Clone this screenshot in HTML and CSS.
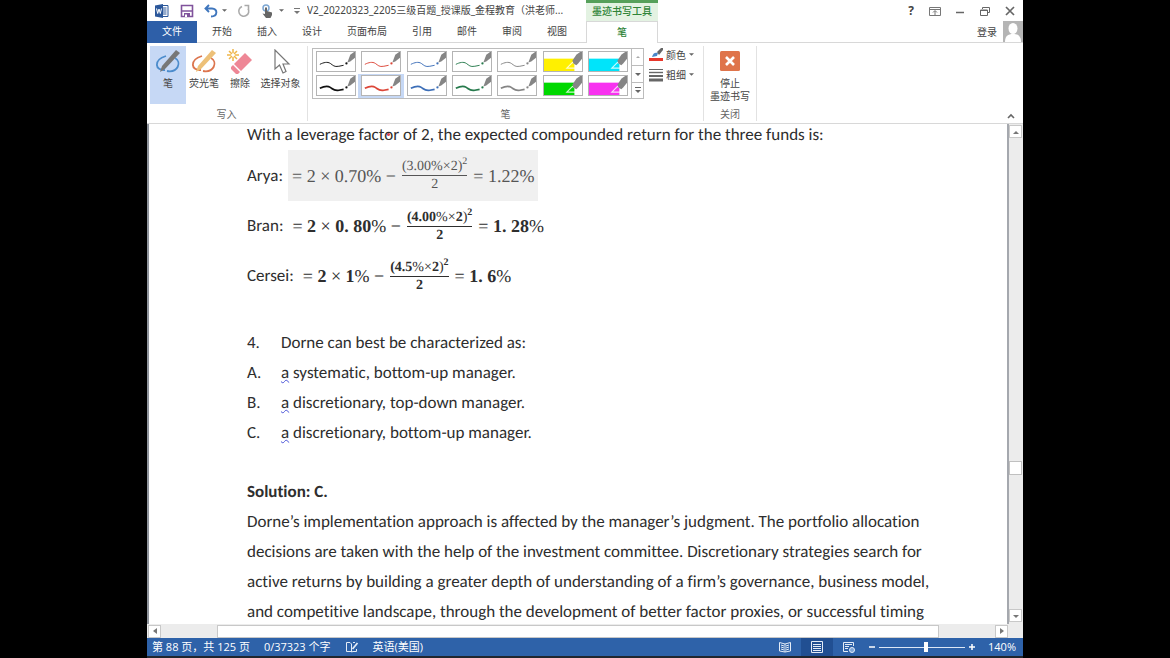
FILE: index.html
```html
<!DOCTYPE html>
<html lang="zh-CN">
<head>
<meta charset="utf-8">
<title>V2_20220323_2205三级百题_授课版</title>
<link rel="stylesheet" href="styles.css">
</head>
<body>
<svg class="defs" aria-hidden="true">
  <symbol id="nib" viewBox="0 0 40 20">
    <path d="M32 11L35 3L39 0H40V6L35 10Z" fill="#858585"/>
    <circle cx="31" cy="12" r="1.2" fill="currentColor"/>
  </symbol>
  <symbol id="fine" viewBox="0 0 40 20">
    <path d="M3 13C7 11 11 10 14 12S18 16 23 15L28 14" fill="none" stroke="currentColor"/>
    <use href="#nib"/>
  </symbol>
  <symbol id="bold" viewBox="0 0 40 20">
    <path d="M3 13C7 11 11 10 14 12S18 16 23 15L28 14" fill="none" stroke="currentColor" stroke-width="1.8"/>
    <use href="#nib"/>
  </symbol>
  <symbol id="marker" viewBox="0 0 40 20">
    <path d="M0 7H32V20H0Z" fill="currentColor"/>
    <path d="M30 11L24 17H33L34 13Z" fill="none" stroke="#fff" stroke-opacity=".8" stroke-width="1.2"/>
    <path d="M31 12L30 9L34 3L38 0H40V7L36 12L34 14Z" fill="#858585"/>
  </symbol>
  <symbol id="down" viewBox="0 0 6 4"><path d="M0 0H6L3 3Z" fill="#666"/></symbol>
</svg>

<div class="app">
  <header class="head">
    <div class="titlebar">
      <div class="quick">
        <svg class="i16" viewBox="0 0 16 16"><path d="M8 2.500H14V13.500H8" fill="#fff" stroke="#2b579a"/><path d="M9 5H12.500M9 7H12.500M9 9H12.500M9 11H12.500" stroke="#2b579a"/><path d="M1 2.500L9 1V15L1 13.500Z" fill="#2b579a"/><path d="M2.500 5.500L3.700 10.500L5 6L6.300 10.500L7.500 5.500" fill="none" stroke="#fff"/></svg>
        <button class="plain" aria-label="保存"><svg class="i14" viewBox="0 0 14 14"><path d="M1.500 1.500H12.500V12.500H1.500Z" fill="none" stroke="#80539c" stroke-width="1.600"/><path d="M2 7H12" stroke="#80539c" stroke-width="1.500"/><path d="M4 9H10V13H4Z" fill="#80539c"/><path d="M5 10.500H7V13H5Z" fill="#fff"/></svg></button>
        <button class="plain undo" aria-label="撤消"><svg class="i14" viewBox="0 0 14 14"><path d="M5 1L1.500 4.500L5 8M2 4.500H8C14 4.500 14 12.500 7 12.500" fill="none" stroke="#3f76bd" stroke-width="1.900"/></svg><svg class="caret"><use href="#down"/></svg></button>
        <button class="plain" aria-label="重复"><svg class="i14" viewBox="0 0 14 14"><path d="M5 2.500A5 5 0 1 0 11 4.500M7.500 1.500H11.500V5.500" fill="none" stroke="#aaa" stroke-width="1.600"/></svg></button>
        <button class="plain" aria-label="触摸模式"><svg class="i14" viewBox="0 0 14 14"><circle cx="5" cy="4" r="3" fill="none" stroke="#7da7d3" stroke-width="1.500"/><path d="M4 3.500H6V7L11 8.500V11L9.500 14H5L1.500 9.500L4 10Z" fill="#666"/></svg><svg class="caret"><use href="#down"/></svg></button>
        <button class="plain" aria-label="自定义"><svg class="i6" viewBox="0 0 6 8"><path d="M0 1.500H6" stroke="#777"/><path d="M0 4H6L3 7Z" fill="#777"/></svg></button>
      </div>
      <span class="doctitle">V2_20220323_2205三级百题_授课版_金程教育（洪老师...</span>
      <span class="context">墨迹书写工具</span>
      <div class="window">
        <button class="plain help" aria-label="帮助">?</button>
        <button class="plain" aria-label="功能区显示选项"><svg class="i12" viewBox="0 0 12 12"><path d="M.5 2.500H11.500V10.500H.5ZM.5 4.500H11.500M6 10V6M4 7.500L6 5.500L8 7.500" fill="none" stroke="#777"/></svg></button>
        <button class="plain" aria-label="最小化"><svg class="i12" viewBox="0 0 12 12"><path d="M2 7.500H10" stroke="#666" stroke-width="1.500"/></svg></button>
        <button class="plain" aria-label="还原"><svg class="i12" viewBox="0 0 12 12"><path d="M3.500 4V2.500H10.500V7.500H9M1.500 5H8.500V10.500H1.500ZM1.500 5.500H8.500" fill="none" stroke="#666"/></svg></button>
        <button class="plain" aria-label="关闭"><svg class="i12" viewBox="0 0 12 12"><path d="M2 2L10 10M10 2L2 10" stroke="#666" stroke-width="1.700"/></svg></button>
      </div>
    </div>
    <nav class="tabs">
      <button class="file">文件</button>
      <div class="tablist">
        <button class="tab">开始</button><button class="tab">插入</button><button class="tab">设计</button><button class="tab">页面布局</button><button class="tab">引用</button><button class="tab">邮件</button><button class="tab">审阅</button><button class="tab">视图</button>
      </div>
      <button class="tab active">笔</button>
      <button class="login">登录<svg class="avatar" viewBox="0 0 20 21"><path d="M0 0H20V21H0Z" fill="#b5b5b5"/><ellipse cx="10" cy="7.500" rx="4.500" ry="5.500" fill="#fff"/><path d="M2 21C2 15 5 13 10 13S18 15 18 21Z" fill="#fff"/></svg></button>
    </nav>
  </header>

  <section class="ribbon">
    <div class="group write">
      <div class="tools">
        <button class="tool on"><svg class="i26" viewBox="0 0 26 26"><path d="M11 7C-2 11 0 22 10 21M20 9C27 13 23 24 12 22" fill="none" stroke="#4c8ccc" stroke-width="1.800"/><path d="M21 1L25 4L10 20L5 23L7 17Z" fill="#777"/></svg>笔</button>
        <button class="tool"><svg class="i26" viewBox="0 0 26 26"><path d="M11 7C-2 11 0 22 10 21M20 9C27 13 23 24 12 22" fill="none" stroke="#dc754e" stroke-width="1.800"/><path d="M21 1L25 4L10 20L5 23L7 17Z" fill="#edc078"/></svg>荧光笔</button>
        <button class="tool"><svg class="i26" viewBox="0 0 26 26"><path d="M6 0V4M6 8V12M0 6H4M8 6H12M2 2L5 5M7 7L10 10M10 2L7 5M5 7L2 10" stroke="#efb64b" stroke-width="1.500"/><path d="M18 4L25 11L14 22L7 15Z" fill="#ee8796"/><path d="M6 16L13 23L11 25H9L4 20V18Z" fill="#ee8796"/></svg>擦除</button>
        <button class="tool wide"><svg class="i26" viewBox="0 0 26 26"><path d="M7 1V20L11.500 16L15 24L18 22.500L15 15H21Z" fill="#fff" stroke="#777" stroke-width="1.200"/></svg>选择对象</button>
      </div>
      <span class="caption">写入</span>
    </div>
    <div class="group pens">
      <div class="penrow">
        <div class="gallery">
          <div class="swatches">
            <button class="ink black"><svg><use href="#fine"/></svg></button>
            <button class="ink red"><svg><use href="#fine"/></svg></button>
            <button class="ink blue"><svg><use href="#fine"/></svg></button>
            <button class="ink green"><svg><use href="#fine"/></svg></button>
            <button class="ink gray"><svg><use href="#fine"/></svg></button>
            <button class="ink yellow"><svg><use href="#marker"/></svg></button>
            <button class="ink cyan"><svg><use href="#marker"/></svg></button>
            <button class="ink black"><svg><use href="#bold"/></svg></button>
            <button class="ink red chosen"><svg><use href="#bold"/></svg></button>
            <button class="ink blue"><svg><use href="#bold"/></svg></button>
            <button class="ink green"><svg><use href="#bold"/></svg></button>
            <button class="ink gray"><svg><use href="#bold"/></svg></button>
            <button class="ink lime"><svg><use href="#marker"/></svg></button>
            <button class="ink pink"><svg><use href="#marker"/></svg></button>
          </div>
          <div class="spinner">
            <button aria-label="上一行"><svg class="i6" viewBox="0 0 6 8"><path d="M1 5H5L3 3Z" fill="#aaa"/></svg></button>
            <button aria-label="下一行"><svg class="i6" viewBox="0 0 6 8"><path d="M0 3H6L3 6Z" fill="#666"/></svg></button>
            <button aria-label="其他"><svg class="i6" viewBox="0 0 6 8"><path d="M0 1.500H6" stroke="#666"/><path d="M0 4H6L3 7Z" fill="#666"/></svg></button>
          </div>
        </div>
        <div class="options">
          <button class="plain"><svg class="i14" viewBox="0 0 14 14"><path d="M0 10H14V13H0Z" fill="#e8382c"/><path d="M3 9C4 5 6 4 9 5L8 8Z" fill="#4a86c8"/><path d="M8 4L12 0H14V2L10 7Z" fill="#666"/></svg>颜色<svg class="caret"><use href="#down"/></svg></button>
          <button class="plain"><svg class="i14" viewBox="0 0 14 14"><path d="M0 1.500H14" stroke="#666"/><path d="M0 4.500H14" stroke="#666" stroke-width="1.400"/><path d="M0 8H14" stroke="#666" stroke-width="2"/><path d="M0 12H14" stroke="#666" stroke-width="3"/></svg>粗细<svg class="caret"><use href="#down"/></svg></button>
        </div>
      </div>
      <span class="caption">笔</span>
    </div>
    <div class="group stop">
      <button class="tool"><svg class="i26" viewBox="0 0 26 26"><rect x="3" y="2" width="20" height="20" rx="1.500" fill="#df744b"/><path d="M9 8L17 16M17 8L9 16" stroke="#fff" stroke-width="2.600"/></svg>停止<br>墨迹书写</button>
      <span class="caption">关闭</span>
    </div>
    <button class="plain collapse" aria-label="折叠功能区"><svg class="i10" viewBox="0 0 10 10"><path d="M2 7L5 4L8 7" fill="none" stroke="#666" stroke-width="1.600"/></svg></button>
  </section>

  <div class="work">
    <main class="page">
      <div class="content">
        <p class="line">With a leverage fact<span class="pointed">o</span>r of 2, the expected compounded return for the three funds is:</p>
        <div class="formula"><span>Arya:</span><span class="math shaded"><span>= 2 × 0.70% −</span><span class="frac"><span class="num">(3.00%×2)<sup>2</sup></span><span class="den">2</span></span><span>= 1.22%</span></span></div>
        <div class="formula"><span>Bran:</span><span class="math"><span>= <b>2</b> × <b>0. 80</b>% −</span><span class="frac"><span class="num"><b>(4.00</b>%×<b>2</b>)<sup><b>2</b></sup></span><b class="den">2</b></span><span>= <b>1. 28</b>%</span></span></div>
        <div class="formula"><span>Cersei:</span><span class="math"><span>= <b>2</b> × <b>1</b>% −</span><span class="frac"><span class="num"><b>(4.5</b>%×<b>2</b>)<sup><b>2</b></sup></span><b class="den">2</b></span><span>= <b>1. 6</b>%</span></span></div>
        <div class="question">
          <p class="item"><span>4.</span><span>Dorne can best be characterized as:</span></p>
          <p class="item"><span>A.</span><span><u>a</u> systematic, bottom-up manager.</span></p>
          <p class="item"><span>B.</span><span><u>a</u> discretionary, top-down manager.</span></p>
          <p class="item"><span>C.</span><span><u>a</u> discretionary, bottom-up manager.</span></p>
        </div>
        <p class="line"><b>Solution: C.</b></p>
        <p class="para">Dorne’s implementation approach is affected by the manager’s judgment. The portfolio allocation<br>decisions are taken with the help of the investment committee. Discretionary strategies search for<br>active returns by building a greater depth of understanding of a firm’s governance, business model,<br>and competitive landscape, through the development of better factor proxies, or successful timing</p>
      </div>
    </main>
    <div class="vscroll">
      <button aria-label="向上"><svg class="i6" viewBox="0 0 6 8"><path d="M0 6H6L3 3Z" fill="#777"/></svg></button>
      <div class="vtrack"><div class="vthumb"></div></div>
      <button aria-label="向下"><svg class="i6" viewBox="0 0 6 8"><path d="M0 3H6L3 6Z" fill="#777"/></svg></button>
    </div>
  </div>

  <div class="hscroll">
    <button aria-label="向左"><svg class="i6" viewBox="0 0 6 8"><path d="M5 1V7L1 4Z" fill="#777"/></svg></button>
    <div class="htrack"><div class="hthumb"></div></div>
    <button aria-label="向右"><svg class="i6" viewBox="0 0 6 8"><path d="M1 1V7L5 4Z" fill="#777"/></svg></button>
  </div>

  <footer class="status">
    <span>第 88 页，共 125 页</span>
    <span>0/37323 个字</span>
    <svg class="i14" viewBox="0 0 14 14"><path d="M6 11.500H1.500V2.500H5L6.500 4V12L8 11.500H11.500V9M8 2.500H10" fill="none" stroke="#e4ecf7"/><path d="M7.500 9L12.500 3" stroke="#e4ecf7" stroke-width="1.800"/></svg>
    <span>英语(美国)</span>
    <div class="views">
      <button class="view" aria-label="阅读视图"><svg class="i12" viewBox="0 0 12 12"><path d="M.5 1.500L6 3L11.500 1.500V10L6 11L.5 10ZM6 3V11M2 4L5 5M2 6L5 7M2 8L5 9M10 4L7 5M10 6L7 7M10 8L7 9" fill="none" stroke="#e4ecf7"/></svg></button>
      <button class="view current" aria-label="页面视图"><svg class="i12" viewBox="0 0 12 12"><path d="M.5 .5H11.500V11.500H.5ZM2 3.500H10M2 5.500H10M2 7.500H10M2 9.500H10" fill="none" stroke="#e4ecf7"/></svg></button>
      <button class="view" aria-label="Web 版式视图"><svg class="i12" viewBox="0 0 12 12"><path d="M5 10.500H.5V1.500H10.500V5M2 3.500H9M2 5.500H6M2 7.500H5" fill="none" stroke="#e4ecf7"/><circle cx="9" cy="9" r="2.500" fill="#7fa5d6" stroke="#e4ecf7"/></svg></button>
    </div>
    <button class="zoomkey" aria-label="缩小"><svg class="i6" viewBox="0 0 6 8"><path d="M0 4H6" stroke="#fff" stroke-width="1.500"/></svg></button>
    <input class="zoom" type="range" min="10" max="270" value="152" aria-label="显示比例">
    <button class="zoomkey" aria-label="放大"><svg class="i6" viewBox="0 0 6 8"><path d="M0 4H6M3 1V7" stroke="#fff" stroke-width="1.500"/></svg></button>
    <span class="percent">140%</span>
  </footer>
</div>
</body>
</html>
```
FILE: styles.css
```css
* { box-sizing: border-box; }
body {
  margin: 0;
  background: #000;
  font: 10px/14px "Open Sans", "Noto Sans CJK SC", sans-serif;
  color: #444;
}
button {
  margin: 0;
  padding: 0;
  border: 0;
  background: none;
  font: inherit;
  color: inherit;
}
p { margin: 0; }
svg { flex: none; display: block; }
.defs { position: absolute; width: 0; height: 0; }
.i6 { width: 6px; height: 8px; }
.i10 { width: 10px; height: 10px; }
.i12 { width: 12px; height: 12px; }
.i14 { width: 14px; height: 14px; }
.i16 { width: 16px; height: 16px; }
.i26 { width: 26px; height: 26px; }
.caret { width: 5px; height: 4px; }
.plain { display: flex; align-items: center; gap: 4px; }

.app {
  display: flex;
  flex-direction: column;
  height: 100vh;
  margin: 0 147px;
  background: #fff;
  border-bottom: 2px solid #20262f;
}

.titlebar { display: flex; height: 21px; }
.quick { display: flex; align-items: center; gap: 10px; width: 160px; padding-left: 7px; }
.doctitle { width: 279px; line-height: 20px; white-space: nowrap; overflow: hidden; font-family: "Noto Sans", "Noto Sans CJK SC", sans-serif; }
.context {
  width: 72px;
  border-top: 3px solid #55a05a;
  background: #e3f2e2;
  color: #2f8438;
  font-weight: 500;
  line-height: 16px;
  text-align: center;
}
.window { display: flex; align-items: center; gap: 13px; margin-left: auto; padding-right: 7px; }
.help { font-size: 12px; font-weight: 700; margin-right: 2px; }

.tabs { display: flex; height: 22px; border-bottom: 1px solid #d8d8d8; }
.tabs button { padding-bottom: 2px; }
.file { width: 50px; height: 22px; background: #2e5fa8; color: #fff; }
.tablist { display: flex; gap: 1px; width: 389px; padding-left: 3px; }
.tab { padding: 0 12px; }
.tab.active {
  width: 72px;
  height: 22px;
  background: #fff;
  border: 1px solid #d8d8d8;
  border-bottom: 0;
  color: #2f8438;
  font-weight: 500;
}
.tabs .login { display: flex; align-items: center; gap: 6px; margin-left: auto; padding: 0; }
.avatar { width: 20px; height: 21px; }

.ribbon { display: flex; height: 81px; padding: 3px 0 2px; border-bottom: 1px solid #d8d8d8; }
.group { display: flex; flex-direction: column; border-right: 1px solid #e2e2e2; }
.caption { margin-top: auto; line-height: 13px; text-align: center; color: #666; }
.write { width: 161px; padding-left: 3px; }
.write .caption, .pens .caption { padding-right: 4px; }
.tools { display: flex; }
.tool { display: flex; flex-direction: column; align-items: center; width: 36px; line-height: 13px; white-space: nowrap; }
.tools .tool { height: 58px; padding-top: 3px; gap: 2px; }
.tools .tool.wide { width: 45px; }
.on { background: #c6d8f5; }
.pens { width: 396px; padding: 2px 0 0 4px; }
.penrow { display: flex; gap: 5px; }
.gallery { display: flex; width: 332px; height: 51px; border: 1px solid #bcbcbc; }
.swatches { display: grid; grid-template-columns: repeat(7, 1fr); flex: 1; }
.ink { display: grid; place-items: center; }
.ink svg { width: 40px; height: 21px; border: 1px solid #b4b4b4; background: #fff; }
.chosen { background: #c6d8f5; }
.black { color: #111; }
.red { color: #dc4638; }
.blue { color: #3d6fb8; }
.green { color: #267a4c; }
.gray { color: #858585; }
.yellow { color: #fff000; }
.cyan { color: #00e4fa; }
.lime { color: #00d800; }
.pink { color: #f832f0; }
.spinner { display: grid; grid-template-rows: 1fr 1fr 1fr; width: 12px; border-left: 1px solid #bcbcbc; }
.spinner button { display: grid; place-items: center; }
.spinner button + button { border-top: 1px solid #bcbcbc; }
.options { display: flex; flex-direction: column; gap: 6px; }
.options .plain { gap: 3px; }
.stop { width: 53px; align-items: center; padding-top: 3px; }
.stop .tool { gap: 2px; }
.collapse { align-self: flex-end; margin-left: auto; padding-right: 7px; }

.work { display: flex; flex: 1; min-height: 0; }
.page {
  flex: 1;
  overflow: hidden;
  padding: 0 98px;
  border-left: 2px solid #8f949c;
  border-right: 2px solid #a5a8ae;
  font: 17px/30px Carlito, Calibri, Lato, sans-serif;
  font-variant-ligatures: none;
  text-rendering: geometricPrecision;
  color: #2e2e2e;
}
.content { margin-top: -4px; white-space: nowrap; }
.pointed { background: radial-gradient(circle, #e0485a 0 1px, transparent 2px); }
.formula { display: flex; align-items: center; gap: 5px; height: 51px; }
.formula + .formula { height: 50px; }
.math {
  display: flex;
  align-items: center;
  gap: 6px;
  height: 100%;
  padding: 0 4px;
  font: 18px/20px "Liberation Serif", serif;
}
.shaded { background: #f0f0f0; color: #555; }
.frac { display: flex; flex-direction: column; align-items: center; font-size: 14px; line-height: 17px; }
.num { border-bottom: 1px solid currentColor; }
.num sup { font-size: 10px; line-height: 1px; }
.question { padding: 27px 0 29px; }
.item { display: grid; grid-template-columns: 34px 1fr; }
.item u { text-decoration: underline wavy #4b55d8 1px; text-underline-offset: 1px; }
.para { text-align: justify; text-align-last: justify; }

.vscroll { display: flex; flex-direction: column; width: 14px; padding: 1px 1px 2px 0; background: #ececec; }
.vscroll button, .hscroll button { display: grid; place-items: center; width: 13px; height: 13px; border: 1px solid #c8c8c8; background: #fff; }
.vtrack { flex: 1; display: grid; grid-template-rows: 324fr 14px 134fr; }
.vthumb { grid-row: 2; border: 1px solid #c0c0c0; background: #fff; }
.hscroll { display: flex; height: 14px; padding: 0 15px 0 1px; background: #ececec; align-items: center; }
.htrack { flex: 1; height: 13px; display: grid; grid-template-columns: 56fr 722fr 56fr; }
.hthumb { grid-column: 2; border: 1px solid #c8c8c8; background: #fff; }

.status {
  display: flex;
  align-items: center;
  gap: 14px;
  height: 18px;
  padding: 0 7px 0 5px;
  background: #2e62a9;
  color: #fff;
  font-size: 11px;
  white-space: nowrap;
}
.views { display: flex; align-self: stretch; margin-left: auto; }
.view { display: grid; place-items: center; width: 32px; }
.current { background: #214f92; }
.zoomkey, .status .zoom { margin-left: -10px; }
.zoom { appearance: none; width: 86px; height: 14px; margin: 0; background: linear-gradient(#dce7f6, #dce7f6) center / 100% 1px no-repeat; }
.zoom::-webkit-slider-thumb { appearance: none; width: 4px; height: 10px; background: #fff; }
.percent { margin-left: -1px; }
```
